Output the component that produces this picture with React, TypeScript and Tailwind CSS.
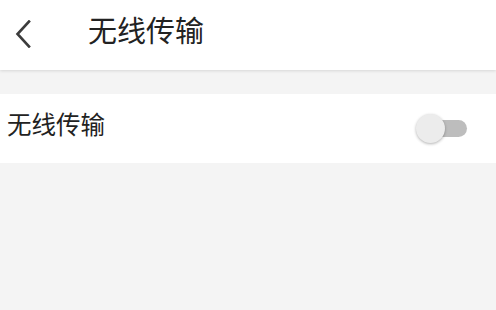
export default function App() {
  return (
    <div className="w-[496px] h-[310px] bg-[#f4f4f4] flex flex-col" style={{ fontFamily: '"Noto Sans CJK SC", "Noto Sans", sans-serif' }}>
      {/* Header */}
      <div className="h-[70px] bg-white flex items-center shadow-[0_1px_3px_rgba(0,0,0,0.12)] relative z-10">
        <div className="w-[88px] pl-[15px] flex items-center -mt-[2px]">
          <svg width="16" height="28" viewBox="0 0 16 28" fill="none">
            <path d="M14 1.5 L2.5 14 L14 26.5" stroke="#3c3c3c" strokeWidth="2.6" strokeLinecap="square" />
          </svg>
        </div>
        <span className="text-[29px] text-[#222] leading-none -mt-[11px]">无线传输</span>
      </div>

      {/* Row */}
      <div className="mt-[24px] h-[69px] bg-white flex items-center justify-between pl-[7px] pr-[29px]">
        <span className="text-[24.5px] text-[#222] leading-none -mt-[8px]">无线传输</span>
        <div className="relative w-[51px] h-[30px] flex items-center">
          <div className="absolute right-0 w-[38px] h-[17px] rounded-full bg-[#bdbdbd]" />
          <div className="absolute left-0 w-[29px] h-[29px] rounded-full bg-[#ececec] shadow-[0_1px_3px_rgba(0,0,0,0.3)]" />
        </div>
      </div>
    </div>
  );
}
